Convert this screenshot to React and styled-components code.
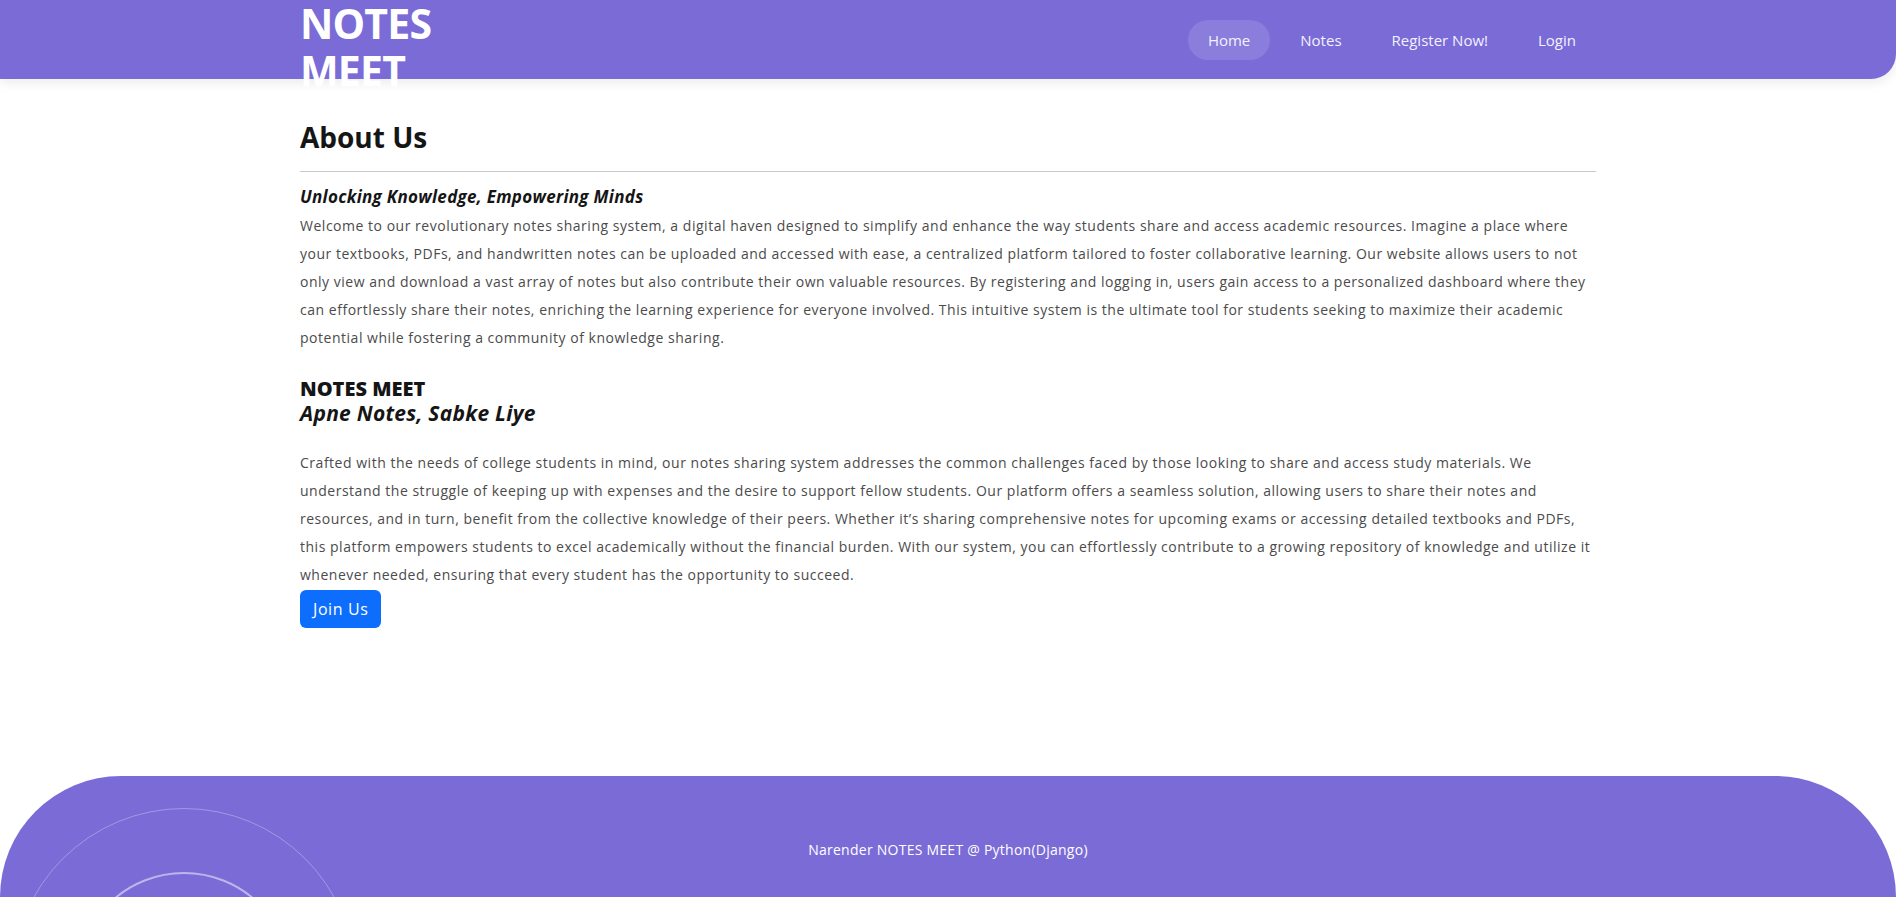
import React from 'react';
import styled, { createGlobalStyle } from 'styled-components';

const PURPLE = '#7a6bd7';

const GlobalStyle = createGlobalStyle`
  html, body {
    margin: 0;
    padding: 0;
    overflow: hidden;
  }
  body {
    font-family: "Open Sans", "Noto Sans", sans-serif;
    background: #fff;
  }
  * { box-sizing: border-box; }
`;

const Page = styled.div`
  min-height: 100vh;
  display: flex;
  flex-direction: column;
`;

const Header = styled.header`
  position: relative;
  z-index: 2;
  height: 79px;
  background: ${PURPLE};
  border-bottom-right-radius: 25px;
  box-shadow: 0 4px 12px rgba(0, 0, 0, 0.08);
`;

const HeaderInner = styled.div`
  width: 1296px;
  height: 100%;
  margin: 0 auto;
  display: flex;
  justify-content: space-between;
  align-items: center;
`;

const Brand = styled.a`
  align-self: flex-start;
  width: 150px;
  color: #fff;
  font-size: 41px;
  font-weight: 700;
  line-height: 47px;
  letter-spacing: -0.8px;
  text-decoration: none;
  cursor: pointer;
`;

const NavList = styled.ul`
  display: flex;
  gap: 10px;
  list-style: none;
  margin: 0;
  padding: 0;
`;

const NavLink = styled.a`
  display: block;
  padding: 9px 20px;
  border-radius: 20px;
  font-size: 15px;
  line-height: 22px;
  color: #f3f1ff;
  text-decoration: none;
  background: ${(p) => (p.$active ? 'rgba(255, 255, 255, 0.12)' : 'transparent')};
`;

const Main = styled.main`
  flex: 1;
  width: 1296px;
  margin: 0 auto;
  padding-top: 41px;
`;

const Title = styled.h2`
  margin: 0;
  font-size: 28px;
  line-height: 34px;
  font-weight: 700;
  color: #151515;
`;

const Rule = styled.hr`
  border: 0;
  border-top: 1px solid #c9c9c9;
  margin: 17px 0 11px;
`;

const Text = styled.p`
  margin: ${(p) => (p.$spaced ? '24px 0 0' : '0')};
  font-size: 14px;
  letter-spacing: 0.52px;
  line-height: 28px;
  color: #4b4b4b;
`;

const Lead = styled.strong`
  font-size: 17px;
  letter-spacing: 0.3px;
  font-style: italic;
  font-weight: 700;
  color: #151515;
`;

const Tagline = styled.div`
  margin-top: 25px;
  font-size: 20px;
  line-height: 24px;
  font-weight: 800;
  color: #151515;
`;

const Slogan = styled.em`
  display: block;
  font-size: 21px;
  letter-spacing: 0.25px;
  font-weight: 700;
`;

const JoinButton = styled.button`
  margin-top: 1px;
  padding: 7px 13px;
  border: 0;
  border-radius: 6px;
  background: #0d6efd;
  color: #fff;
  font-family: inherit;
  font-size: 16px;
  letter-spacing: 0.6px;
  line-height: 24px;
  cursor: pointer;
`;

const Footer = styled.footer`
  position: relative;
  height: 121px;
  padding-top: 63px;
  overflow: hidden;
  background: ${PURPLE};
  border-radius: 150px 150px 0 0;
  display: flex;
  justify-content: center;
  align-items: flex-start;
`;

const Ring = styled.span`
  position: absolute;
  left: ${(p) => 184 - p.$r}px;
  top: ${(p) => 204 - p.$r}px;
  width: ${(p) => p.$r * 2}px;
  height: ${(p) => p.$r * 2}px;
  border-radius: 50%;
  border: ${(p) => p.$w}px solid rgba(255, 255, 255, ${(p) => p.$alpha});
`;

const FooterText = styled.p`
  margin: 0;
  font-size: 14px;
  letter-spacing: 0.25px;
  line-height: 21px;
  color: #fff;
`;

const links = [
  { label: 'Home', active: true },
  { label: 'Notes' },
  { label: 'Register Now!' },
  { label: 'Login' },
];

export default function App() {
  return (
    <Page>
      <GlobalStyle />
      <Header>
        <HeaderInner>
          <Brand href="#">NOTES MEET</Brand>
          <nav>
            <NavList>
              {links.map((l) => (
                <li key={l.label}>
                  <NavLink href="#" $active={l.active}>{l.label}</NavLink>
                </li>
              ))}
            </NavList>
          </nav>
        </HeaderInner>
      </Header>

      <Main>
        <Title>About Us</Title>
        <Rule />
        <Text>
          <Lead>Unlocking Knowledge, Empowering Minds</Lead>
          <br />
          Welcome to our revolutionary notes sharing system, a digital haven designed to simplify and enhance the way students share and access academic resources. Imagine a place where your textbooks, PDFs, and handwritten notes can be uploaded and accessed with ease, a centralized platform tailored to foster collaborative learning. Our website allows users to not only view and download a vast array of notes but also contribute their own valuable resources. By registering and logging in, users gain access to a personalized dashboard where they can effortlessly share their notes, enriching the learning experience for everyone involved. This intuitive system is the ultimate tool for students seeking to maximize their academic potential while fostering a community of knowledge sharing.
        </Text>

        <Tagline>
          NOTES MEET
          <Slogan>Apne Notes, Sabke Liye</Slogan>
        </Tagline>

        <Text $spaced>
          Crafted with the needs of college students in mind, our notes sharing system addresses the common challenges faced by those looking to share and access study materials. We understand the struggle of keeping up with expenses and the desire to support fellow students. Our platform offers a seamless solution, allowing users to share their notes and resources, and in turn, benefit from the collective knowledge of their peers. Whether it’s sharing comprehensive notes for upcoming exams or accessing detailed textbooks and PDFs, this platform empowers students to excel academically without the financial burden. With our system, you can effortlessly contribute to a growing repository of knowledge and utilize it whenever needed, ensuring that every student has the opportunity to succeed.
        </Text>
        <JoinButton>Join Us</JoinButton>
      </Main>

      <Footer>
        <Ring $r={172} $w={1} $alpha={0.3} />
        <Ring $r={108} $w={2} $alpha={0.5} />
        <FooterText>Narender NOTES MEET @ Python(Django)</FooterText>
      </Footer>
    </Page>
  );
}
